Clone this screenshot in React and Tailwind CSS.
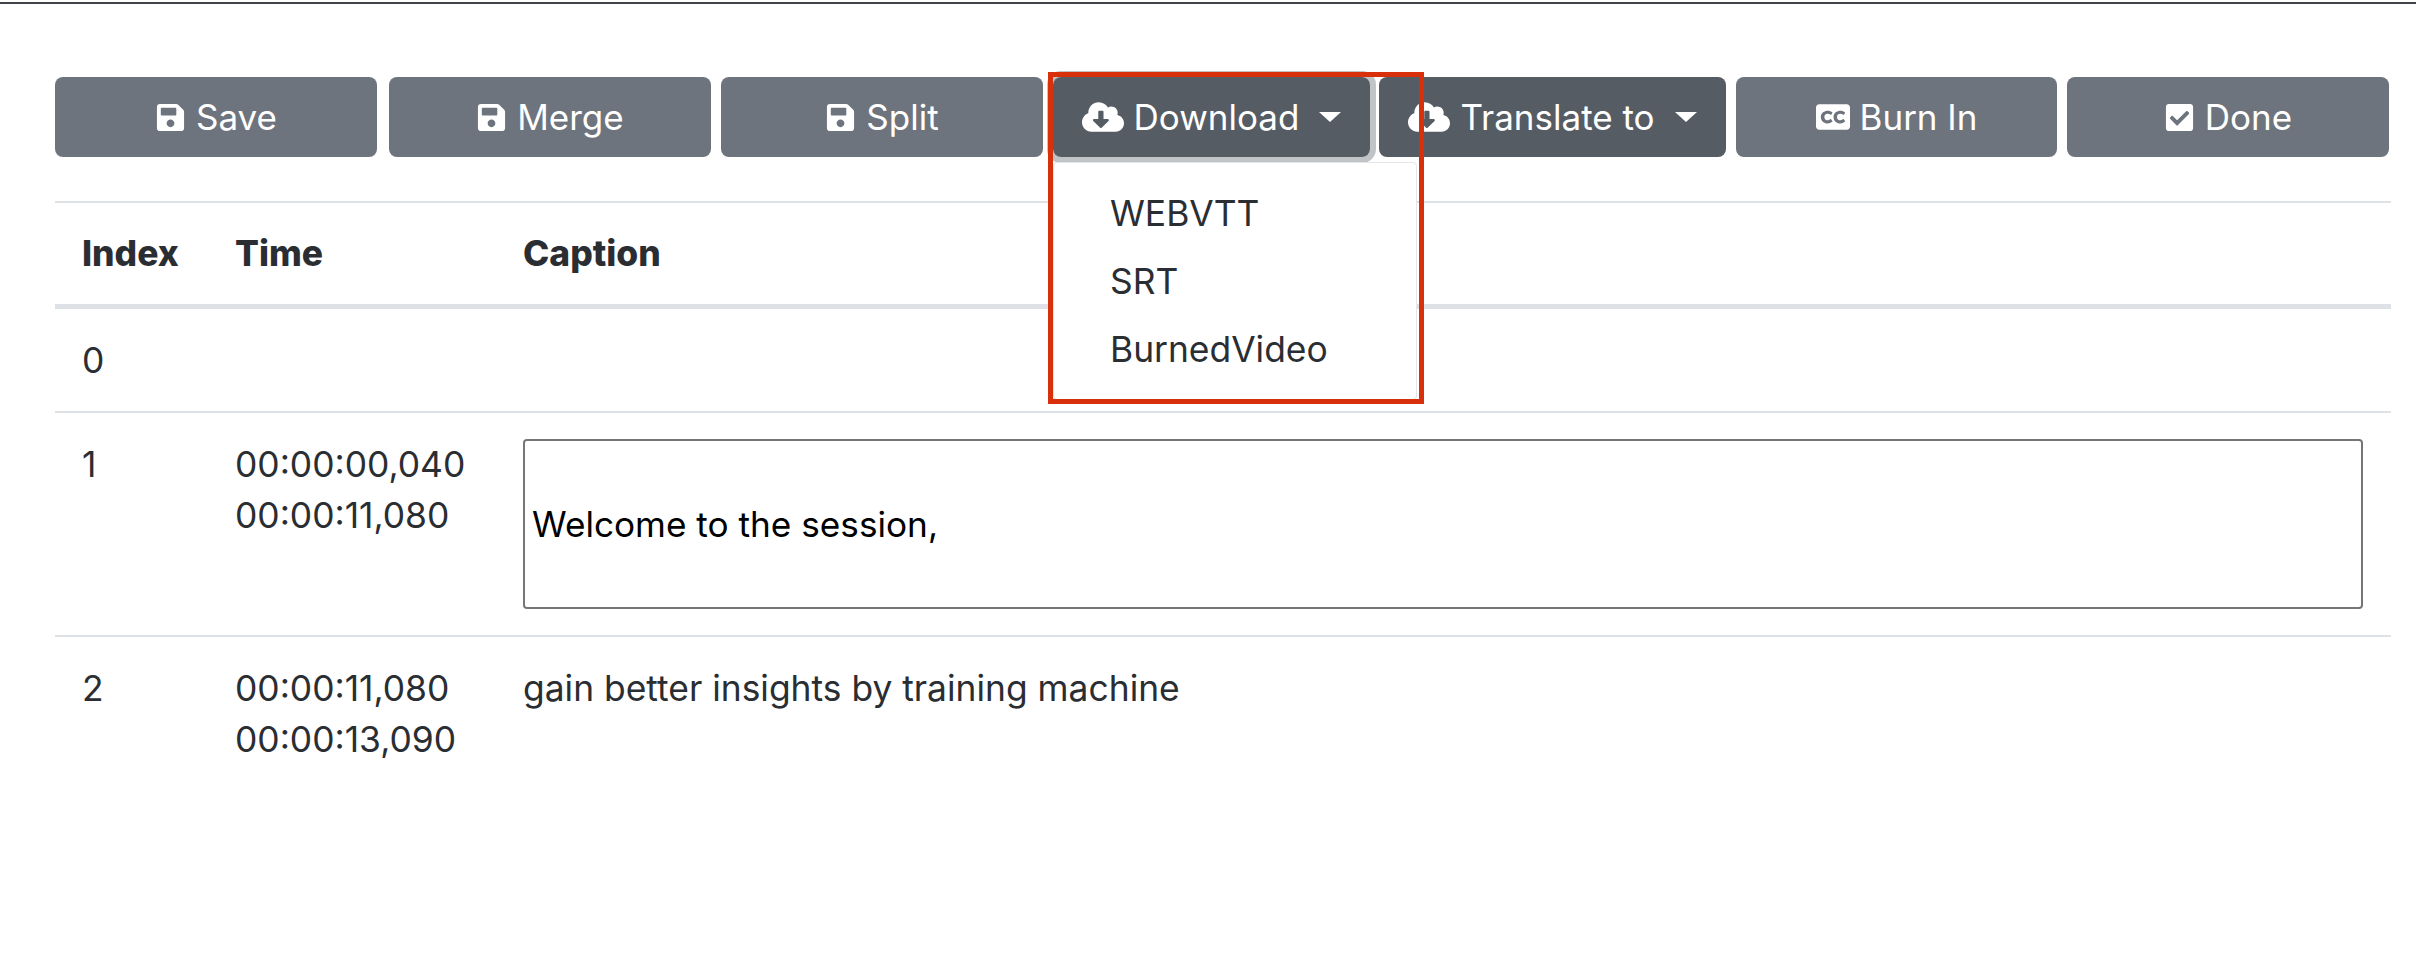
import { FaSave, FaCloudDownloadAlt, FaClosedCaptioning, FaCheckSquare } from "react-icons/fa";

const Caret = () => (
  <span className="ml-[20px] inline-block border-x-[11px] border-t-[10px] border-x-transparent border-t-white" />
);

function ActionButton({ icon: Icon, label, width, dark, caret, iconSize = 31 }) {
  return (
    <button
      type="button"
      style={{ width }}
      className={`flex h-[80px] shrink-0 items-center justify-center rounded-[8px] text-[35px] text-white ${
        dark ? "bg-[#565c64]" : "bg-[#6e747d]"
      }`}
    >
      <Icon size={iconSize} className="mr-[10px] shrink-0" />
      <span>{label}</span>
      {caret && <Caret />}
    </button>
  );
}

const rows = [
  { index: 0, start: "", end: "" },
  { index: 1, start: "00:00:00,040", end: "00:00:11,080", editing: "Welcome to the session," },
  { index: 2, start: "00:00:11,080", end: "00:00:13,090", caption: "gain better insights by training machine" },
];

export default function App() {
  return (
    <div className="min-h-[975px] bg-white font-['Inter',sans-serif] text-[35.4px] leading-[51px] text-[#2a2e33]">
      <div className="mt-[2px] h-[2px] bg-[#3f4347]" />

      <div className="px-[55px] pt-[73px]">
        {/* toolbar */}
        <div className="flex">
          <ActionButton icon={FaSave} label="Save" width={322} />
          <div className="ml-[12px]">
            <ActionButton icon={FaSave} label="Merge" width={322} />
          </div>
          <div className="ml-[10px]">
            <ActionButton icon={FaSave} label="Split" width={322} />
          </div>
          <div className="relative ml-[10px]">
            <div className="rounded-[8px] shadow-[0_0_0_6px_#c0c4c7]">
              <ActionButton icon={FaCloudDownloadAlt} iconSize={42} label="Download" width={317} dark caret />
            </div>
            {/* open menu */}
            <div className="absolute left-0 top-[85px] z-10 h-[238px] w-[364px] rounded-[4px] border border-[#e4e5e7] bg-white py-[16px] pl-[56px]">
              <div className="flex h-[68px] items-center">WEBVTT</div>
              <div className="flex h-[68px] items-center">SRT</div>
              <div className="flex h-[68px] items-center">BurnedVideo</div>
            </div>
            {/* red annotation box */}
            <div className="absolute left-[-5px] top-[-5px] z-20 h-[332px] w-[376px] border-[5px] border-[#d9300c]" />
          </div>
          <div className="ml-[9px]">
            <ActionButton icon={FaCloudDownloadAlt} iconSize={42} label="Translate to" width={347} dark caret />
          </div>
          <div className="ml-[10px]">
            <ActionButton icon={FaClosedCaptioning} iconSize={34} label="Burn In" width={321} />
          </div>
          <div className="ml-[10px]">
            <ActionButton icon={FaCheckSquare} label="Done" width={322} />
          </div>
        </div>

        {/* captions table */}
        <table className="mt-[44px] w-[2336px] table-fixed border-collapse">
          <colgroup>
            <col className="w-[153px]" />
            <col className="w-[288px]" />
            <col />
          </colgroup>
          <thead>
            <tr className="border-y-[2px] border-t-[#dee2e6] border-b-[#dee2e6]">
              <th className="px-[27px] py-[25px] text-left font-extrabold">Index</th>
              <th className="px-[27px] py-[25px] text-left font-extrabold">Time</th>
              <th className="px-[27px] py-[25px] text-left font-extrabold">Caption</th>
            </tr>
          </thead>
          <tbody>
            {rows.map((row) => (
              <tr
                key={row.index}
                className="border-t-[2px] border-[#dee2e6] first:border-t-[5px] [&:first-child>td]:pb-[25px]"
              >
                <td className="px-[27px] py-[26px] align-top">{row.index}</td>
                <td className="px-[27px] py-[26px] align-top">
                  {row.start ? (
                    <>
                      <div>{row.start}</div>
                      <div>{row.end}</div>
                    </>
                  ) : (
                    <div className="h-[51px]" />
                  )}
                </td>
                <td className="py-[26px] pl-[27px] pr-[28px] align-top">
                  {row.editing ? (
                    <div className="flex h-[170px] items-center rounded-[4px] border-[2px] border-[#767676] pl-[7px] text-[35.2px] text-black">
                      {row.editing}
                    </div>
                  ) : (
                    row.caption
                  )}
                </td>
              </tr>
            ))}
          </tbody>
        </table>
      </div>
    </div>
  );
}
